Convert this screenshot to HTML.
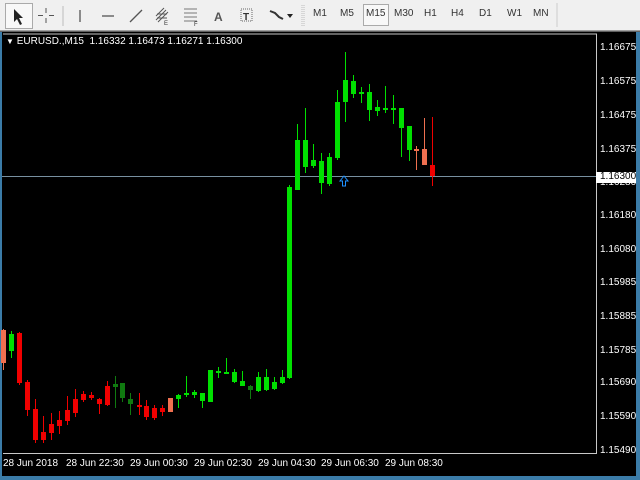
<!DOCTYPE html>
<html><head><meta charset="utf-8"><style>
html,body{margin:0;padding:0;width:640px;height:480px;overflow:hidden;background:#000;font-family:"Liberation Sans",sans-serif}
#tb{position:absolute;left:0;top:0;width:640px;height:30px;background:#f0f0f0;border-bottom:1px solid #a0a0a0}
.tf{position:absolute;top:8px;font-size:10px;color:#333}
.pl{position:absolute;left:600px;font-size:10px;color:#fff;line-height:10px}
.tl{position:absolute;top:459px;font-size:10px;color:#fff;line-height:10px}
</style></head><body>
<div id="tb">
 <div style="position:absolute;left:5px;top:3px;width:26px;height:24px;border:1px solid #aaa;background:#f8f8f8"></div>
 <svg width="640" height="30" style="position:absolute;left:0;top:0">
  <path d="M14 9 L14 22 L17 19 L20 25 L22 24 L19 18 L23 18 Z" fill="#222"/>
  <path d="M46 8 V23 M38 15.5 H54" stroke="#555" stroke-width="1"/>
  <rect x="43" y="13" width="6" height="5" fill="#f0f0f0"/>
  <line x1="63" y1="6" x2="63" y2="26" stroke="#bbb"/>
  <line x1="80" y1="10" x2="80" y2="22" stroke="#555" stroke-width="1.3"/>
  <line x1="102" y1="16" x2="114" y2="16" stroke="#555" stroke-width="1.3"/>
  <line x1="130" y1="22" x2="142" y2="10" stroke="#555" stroke-width="1.3"/>
  <path d="M156 20 L166 10 M158 22 L168 12 M156 16 L164 8 M157 14 H167 M157 18 H167" stroke="#555"/>
  <text x="164" y="25" font-size="6" fill="#333" font-family="Liberation Sans">E</text>
  <path d="M184 9 H197 M184 13 H197 M184 17 H197 M184 21 H197" stroke="#777"/>
  <text x="194" y="26" font-size="6" fill="#333" font-family="Liberation Sans">F</text>
  <text x="214" y="21" font-size="12" font-weight="bold" fill="#555" font-family="Liberation Sans">A</text>
  <rect x="241" y="9" width="11" height="12" fill="none" stroke="#666" stroke-dasharray="1,1"/>
  <text x="243" y="20" font-size="10" font-weight="bold" fill="#333" font-family="Liberation Sans">T</text>
  <path d="M270 11 L275 13 L279 17 L283 19" stroke="#333" stroke-width="2"/>
  <path d="M287 14 L293 14 L290 18 Z" fill="#222"/>
  <line x1="302" y1="5" x2="302" y2="26" stroke="#bbb" stroke-dasharray="1,1"/>
  <line x1="304" y1="5" x2="304" y2="26" stroke="#bbb" stroke-dasharray="1,1"/>
  <rect x="363.5" y="4.5" width="25" height="21" fill="#f8f8f8" stroke="#aaa"/>
  <line x1="557" y1="3" x2="557" y2="27" stroke="#ccc"/>
 </svg>
 <span class="tf" style="left:313px">M1</span>
 <span class="tf" style="left:340px">M5</span>
 <span class="tf" style="left:366px">M15</span>
 <span class="tf" style="left:394px">M30</span>
 <span class="tf" style="left:424px">H1</span>
 <span class="tf" style="left:451px">H4</span>
 <span class="tf" style="left:479px">D1</span>
 <span class="tf" style="left:507px">W1</span>
 <span class="tf" style="left:533px">MN</span>
</div>
<svg id="cs" width="640" height="480" style="position:absolute;left:0;top:0">
 <rect x="0" y="31" width="640" height="1" fill="#606060"/>
 <rect x="0" y="32" width="2" height="448" fill="#3b7ca8"/>
 <rect x="636" y="32" width="4" height="448" fill="#3b7ca8"/>
 <rect x="0" y="476" width="640" height="4" fill="#3b7ca8"/>
 <polyline points="3,34 596.5,34 596.5,453.5 3,453.5" fill="none" stroke="#c8c8c8" stroke-width="1"/>
 <line x1="2" y1="176.5" x2="596" y2="176.5" stroke="#7890a0" stroke-width="1"/>
 <path d="M344 176 L340 181 L342.5 181 L342.5 186 L345.5 186 L345.5 181 L348 181 Z" fill="none" stroke="#1e90ff" stroke-width="1"/>
 <g id="cd"></g>
</svg>
<div style="position:absolute;left:6px;top:36px;font-size:10px;color:#fff;white-space:pre"><span style="font-size:8px">▼</span> EURUSD.,M15  1.16332 1.16473 1.16271 1.16300</div>
<div class="pl" style="top:43px">1.16675</div>
<div class="pl" style="top:77px">1.16575</div>
<div class="pl" style="top:111px">1.16475</div>
<div class="pl" style="top:145px">1.16375</div>
<div class="pl" style="top:178px">1.16280</div>
<div style="position:absolute;left:596px;top:172px;width:40px;height:11px;background:#fff"></div>
<div class="pl" style="top:172px;color:#000">1.16300</div>
<div class="pl" style="top:211px">1.16180</div>
<div class="pl" style="top:245px">1.16080</div>
<div class="pl" style="top:278px">1.15985</div>
<div class="pl" style="top:312px">1.15885</div>
<div class="pl" style="top:346px">1.15785</div>
<div class="pl" style="top:378px">1.15690</div>
<div class="pl" style="top:412px">1.15590</div>
<div class="pl" style="top:446px">1.15490</div>
<div class="tl" style="left:3px">28 Jun 2018</div>
<div class="tl" style="left:66px">28 Jun 22:30</div>
<div class="tl" style="left:130px">29 Jun 00:30</div>
<div class="tl" style="left:194px">29 Jun 02:30</div>
<div class="tl" style="left:258px">29 Jun 04:30</div>
<div class="tl" style="left:321px">29 Jun 06:30</div>
<div class="tl" style="left:385px">29 Jun 08:30</div>
<script>
var G='#00e000',D='#107a10',R='#f00000',S='#f07050';
var c=[[3,S,330,363,329,370],[11,G,334,351,331,358],[19,R,333,383,332,385],[27,R,382,410,380,416],[35,R,409,440,399,443],[43,R,432,440,416,443],[51,R,424,433,413,440],[59,R,420,426,411,434],[67,R,410,421,396,425],[75,R,399,413,389,417],[83,R,394,400,391,402],[91,R,395,398,392,400],[99,R,399,404,398,414],[107,R,386,405,381,406],[115,D,384,387,376,408],[122,D,383,398,383,402],[130,D,399,404,393,415],[139,R,405,407,393,415],[146,R,406,417,400,420],[154,R,408,418,405,420],[162,R,408,412,405,416],[170,S,398,412,398,412],[178,G,395,399,394,408],[186,G,393,395,376,397],[194,G,392,395,390,398],[202,G,393,401,393,408],[210,G,370,402,370,402],[218,G,371,373,367,378],[226,G,372,374,358,374],[234,G,372,382,369,383],[242,G,381,386,371,386],[250,D,386,390,385,399],[258,G,377,391,372,392],[266,G,377,390,369,391],[274,G,382,389,377,390],[282,G,377,383,370,384],[289,G,187,378,185,379],[297,G,140,190,124,190],[305,G,140,167,108,173],[313,G,160,166,144,168],[321,G,161,183,153,194],[329,G,157,184,153,186],[337,G,102,158,90,160],[345,G,80,102,52,122],[353,G,81,94,75,98],[361,G,92,94,87,103],[369,G,92,110,84,121],[377,G,107,111,100,116],[385,G,108,110,86,113],[393,G,108,110,95,124],[401,G,108,128,108,157],[409,G,126,150,126,161],[416,S,149,151,146,170],[424,S,149,165,118,165],[432,R,165,176,117,186]];
var h='';c.forEach(function(k){h+='<rect x="'+k[0]+'" y="'+k[4]+'" width="1" height="'+(k[5]-k[4])+'" fill="'+k[1]+'"/><rect x="'+(k[0]-2)+'" y="'+k[2]+'" width="5" height="'+Math.max(2,k[3]-k[2])+'" fill="'+k[1]+'"/>';});
document.getElementById('cd').innerHTML=h;
</script>
</body></html>
